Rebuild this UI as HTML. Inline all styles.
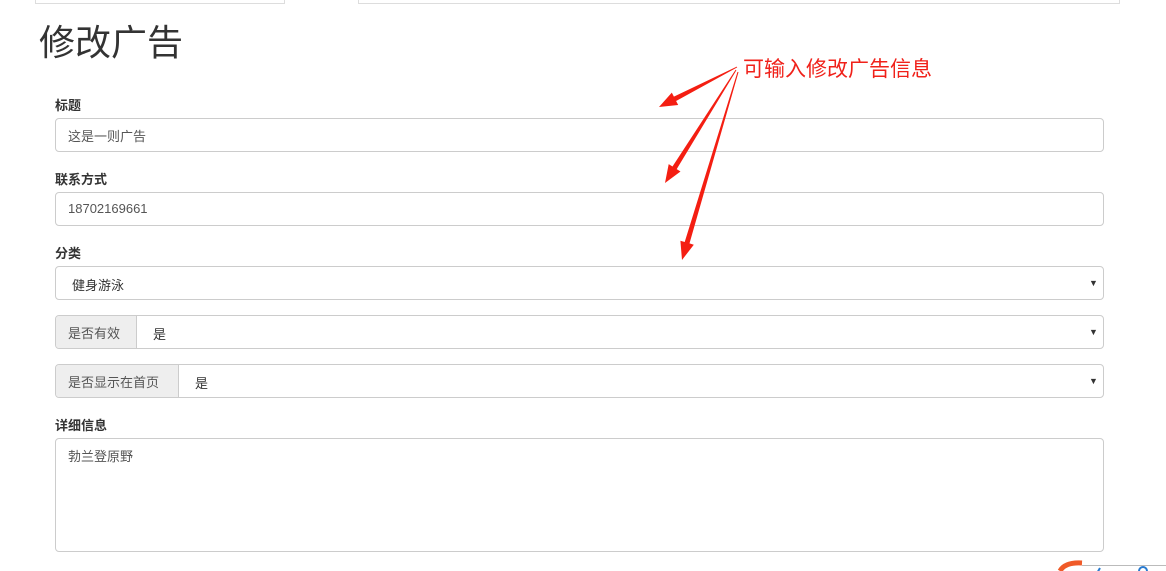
<!DOCTYPE html>
<html><head><meta charset="utf-8"><style>
body{margin:0;width:1166px;height:571px;overflow:hidden;background:#fff;font-family:"Liberation Sans","Noto Sans CJK SC",sans-serif;color:#333;position:relative}
.a{position:absolute}
.box{position:absolute;border:1px solid #ccc;border-radius:4px;background:#fff;box-sizing:border-box}
.lbl{position:absolute;font-size:13px;font-weight:bold;color:#333}
.txt{position:absolute;font-size:13px;color:#555}
.caret{position:absolute;font-size:9px;color:#333}
</style></head><body>
<div class="a" style="left:35px;top:-2px;width:248px;height:5px;border:1px solid #ddd;border-top:none"></div>
<div class="a" style="left:358px;top:-2px;width:760px;height:5px;border:1px solid #ddd;border-top:none"></div>
<div class="a" style="left:39px;top:20px;font-size:36px;color:#333;line-height:46px">修改广告</div>

<div class="lbl" style="left:55px;top:95px">标题</div>
<div class="box" style="left:55px;top:118px;width:1049px;height:34px"></div>
<div class="txt" style="left:68px;top:126px">这是一则广告</div>

<div class="lbl" style="left:55px;top:169px">联系方式</div>
<div class="box" style="left:55px;top:192px;width:1049px;height:34px"></div>
<div class="txt" style="left:68px;top:201px">18702169661</div>

<div class="lbl" style="left:55px;top:243px">分类</div>
<div class="box" style="left:55px;top:266px;width:1049px;height:34px"></div>
<div class="txt" style="left:72px;top:275px;color:#333">健身游泳</div>
<div class="caret" style="left:1089px;top:278px">▼</div>

<div class="box" style="left:55px;top:315px;width:1049px;height:34px"></div>
<div class="a" style="left:56px;top:316px;width:80px;height:32px;background:#eee;border-right:1px solid #ccc;border-radius:3px 0 0 3px"></div>
<div class="txt" style="left:68px;top:323px">是否有效</div>
<div class="txt" style="left:153px;top:324px;color:#333">是</div>
<div class="caret" style="left:1089px;top:327px">▼</div>

<div class="box" style="left:55px;top:364px;width:1049px;height:34px"></div>
<div class="a" style="left:56px;top:365px;width:122px;height:32px;background:#eee;border-right:1px solid #ccc;border-radius:3px 0 0 3px"></div>
<div class="txt" style="left:68px;top:372px">是否显示在首页</div>
<div class="txt" style="left:195px;top:373px;color:#333">是</div>
<div class="caret" style="left:1089px;top:376px">▼</div>

<div class="lbl" style="left:55px;top:415px">详细信息</div>
<div class="box" style="left:55px;top:438px;width:1049px;height:114px"></div>
<div class="txt" style="left:68px;top:446px">勃兰登原野</div>

<div class="a" style="left:743px;top:57px;font-size:21px;color:#f0211a;line-height:26px">可输入修改广告信息</div>
<svg class="a" style="left:0;top:0" width="1166" height="571">
<g fill="#f41e12">
<polygon points="736.8,66.6 673.9,96.6 671.8,92.6 659,107 678.2,105 676.1,101 737.2,67.4"/>
<polygon points="735.6,69.7 672.5,166.5 668.7,164.1 665,183 680.5,171.5 676.7,169.1 736.4,70.3"/>
<polygon points="737.5,71.9 684.7,242 680.4,240.7 682,260 693.8,244.7 689.5,243.4 738.5,72.1"/>
</g>
<path d="M1060,571 Q1065,562 1082,563" stroke="#f05a28" stroke-width="5" fill="none"/>
<line x1="1082" y1="565.5" x2="1166" y2="565.5" stroke="#bbb"/>
<path d="M1096,575 L1100,568 M1139,571 a4,4 0 1 1 8,0" stroke="#2a7bd0" stroke-width="2" fill="none"/>
</svg>
</body></html>
